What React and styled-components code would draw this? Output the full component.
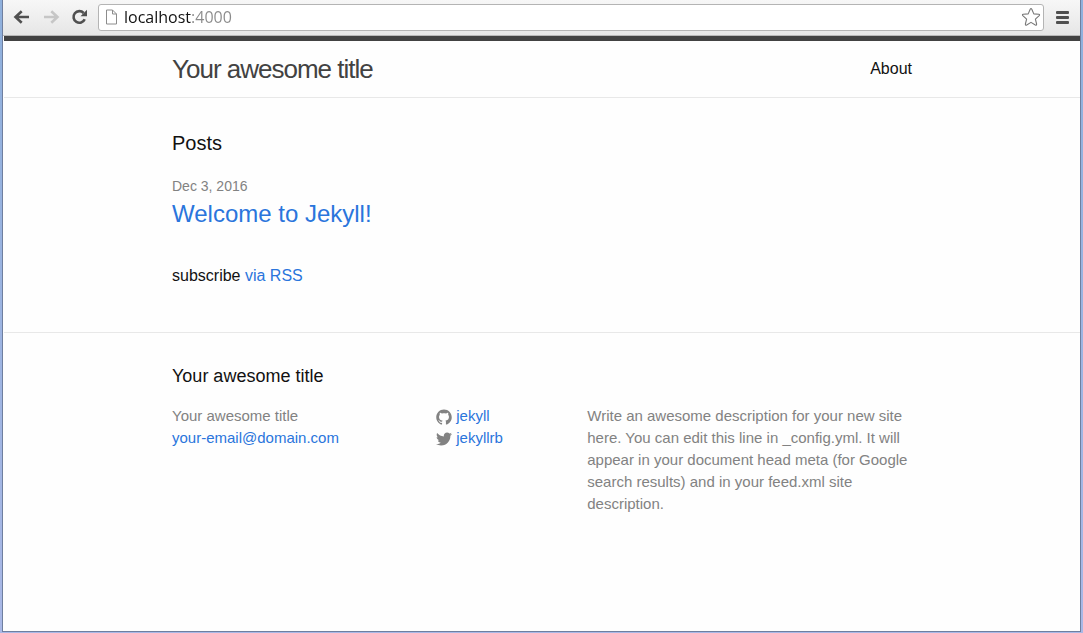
import React from "react";
import styled, { createGlobalStyle } from "styled-components";

const GlobalStyle = createGlobalStyle`
  *, *::before, *::after { box-sizing: border-box; }
  body {
    margin: 0;
    background: #a3bbe2;
    color: #111;
    font: 400 16px/24px "Liberation Sans", Arial, sans-serif;
  }
  h1, h2, h3, p, ul { margin: 0; padding: 0; font-weight: 400; }
  ul { list-style: none; }
`;

const Window = styled.div`
  display: flex;
  flex-direction: column;
  min-height: 100vh;
  padding: 0 2px 1px;
  background: linear-gradient(#8fb0dc, #a9b8e6);
`;

const Frame = styled.div`
  flex: 1;
  display: flex;
  flex-direction: column;
  border: solid #6f7f9f;
  border-width: 0 1px 1px;
  padding-left: 1px;
  background: #fefefe;
`;

const Toolbar = styled.div`
  display: flex;
  align-items: center;
  height: 36px;
  margin-left: -1px;
  padding: 0 9px 1px 8px;
  background: linear-gradient(#f7f7f7, #e6e6e6);
  border-bottom: 1px solid #b8b8b8;
`;

const ToolButton = styled.button`
  display: flex;
  align-items: center;
  justify-content: center;
  width: ${(p) => p.$width || 29}px;
  height: 28px;
  padding: 0;
  border: 0;
  background: none;
  color: ${(p) => (p.disabled ? "#c6c6c6" : "#505050")};
`;

const AddressBar = styled.label`
  flex: 1;
  display: flex;
  align-items: center;
  gap: 6px;
  height: 27px;
  margin: 0 10px 0 8px;
  padding: 0 2px 0 6px;
  border: 1px solid #b4b4b4;
  border-radius: 3px;
  background: #fff;
`;

const AddressInput = styled.input`
  flex: 1;
  min-width: 0;
  height: 24px;
  padding: 0;
  border: 0;
  outline: 0;
  font: 400 16px/24px "Open Sans", "Noto Sans", sans-serif;
  color: #111;
  background: linear-gradient(to right, #111 68px, #8a8a8a 68px);
  background-clip: text;
  -webkit-text-fill-color: transparent;
`;

const Wrapper = styled.div`
  max-width: 800px;
  margin: 0 auto;
  padding: 0 30px;
`;

const Header = styled.header`
  border-top: 5px solid #424242;
  border-bottom: 1px solid #e8e8e8;
`;

const HeaderRow = styled(Wrapper)`
  display: flex;
  justify-content: space-between;
  line-height: 56px;
`;

const SiteTitle = styled.a`
  color: #424242;
  font-size: 26px;
  letter-spacing: -1px;
  text-decoration: none;
`;

const NavLink = styled.a`
  color: #111;
  text-decoration: none;
`;

const Link = styled.a`
  color: #2a75dc;
  text-decoration: none;
`;

const Main = styled.main`
  padding: 30px 0 44px;
`;

const PageHeading = styled.h1`
  margin-bottom: 15px;
  font-size: 20px;
  line-height: 30px;
`;

const PostList = styled.ul`
  margin-bottom: 35px;
`;

const PostDate = styled.time`
  display: block;
  color: #828282;
  font-size: 14px;
  line-height: 26px;
`;

const PostTitle = styled.h2`
  font-size: 24px;
  line-height: 30px;
`;

const Footer = styled.footer`
  padding: 30px 0;
  border-top: 1px solid #e8e8e8;
`;

const FooterHeading = styled.h2`
  margin-bottom: 15px;
  font-size: 18px;
  line-height: 27px;
`;

const FooterColumns = styled.div`
  display: flex;
  margin-left: -15px;
  color: #828282;
  font-size: 15px;
  line-height: 22px;
`;

const FooterColumn = styled.div`
  width: ${(p) => p.$share}%;
  padding-left: 15px;
`;

const SocialLink = styled(Link)`
  display: flex;
  align-items: center;
  gap: 4px;
  svg { fill: #828282; position: relative; top: 1px; }
`;

const GITHUB =
  "M7.999,0.431c-4.285,0-7.76,3.474-7.76,7.761 c0,3.428,2.223,6.337,5.307,7.363c0.388,0.071,0.53-0.168,0.53-0.374c0-0.184-0.007-0.672-0.01-1.32 c-2.159,0.469-2.614-1.04-2.614-1.04c-0.353-0.896-0.862-1.135-0.862-1.135c-0.705-0.481,0.053-0.472,0.053-0.472 c0.779,0.055,1.189,0.8,1.189,0.8c0.692,1.186,1.816,0.843,2.258,0.645c0.071-0.502,0.271-0.843,0.493-1.037 C4.86,11.425,3.049,10.76,3.049,7.786c0-0.847,0.302-1.54,0.799-2.082C3.768,5.507,3.501,4.718,3.924,3.65 c0,0,0.652-0.209,2.134,0.796C6.677,4.273,7.34,4.187,8,4.184c0.659,0.003,1.323,0.089,1.943,0.261 c1.482-1.004,2.132-0.796,2.132-0.796c0.423,1.068,0.157,1.857,0.077,2.054c0.497,0.542,0.798,1.235,0.798,2.082 c0,2.981-1.814,3.637-3.543,3.829c0.279,0.24,0.527,0.713,0.527,1.437c0,1.037-0.01,1.874-0.01,2.129 c0,0.208,0.14,0.449,0.534,0.373c3.081-1.028,5.302-3.935,5.302-7.362C15.76,3.906,12.285,0.431,7.999,0.431z";
const TWITTER =
  "M15.969,3.058c-0.586,0.26-1.217,0.436-1.878,0.515c0.675-0.405,1.194-1.045,1.438-1.809c-0.632,0.375-1.332,0.647-2.076,0.793c-0.596-0.636-1.446-1.033-2.387-1.033c-1.806,0-3.27,1.464-3.27,3.27 c0,0.256,0.029,0.506,0.085,0.745C5.163,5.404,2.753,4.102,1.14,2.124C0.859,2.607,0.698,3.168,0.698,3.767 c0,1.134,0.577,2.135,1.455,2.722C1.616,6.472,1.112,6.325,0.671,6.08c0,0.014,0,0.027,0,0.041c0,1.584,1.127,2.906,2.623,3.206 C3.02,9.402,2.731,9.442,2.433,9.442c-0.211,0-0.416-0.021-0.615-0.059c0.416,1.299,1.624,2.245,3.055,2.271 c-1.119,0.877-2.529,1.4-4.061,1.4c-0.264,0-0.524-0.015-0.78-0.046c1.447,0.928,3.166,1.469,5.013,1.469 c6.015,0,9.304-4.983,9.304-9.304c0-0.142-0.003-0.283-0.009-0.423C14.976,4.29,15.531,3.714,15.969,3.058z";

const SocialIcon = ({ path }) => (
  <svg width="16" height="16" viewBox="0 0 16 16" aria-hidden="true">
    <path d={path} />
  </svg>
);

const ArrowIcon = ({ forward }) => (
  <svg width="18" height="16" viewBox="0 0 18 16" aria-hidden="true">
    <path
      d={forward ? "M2 8H15M9.3 2.2L15.5 8L9.3 13.8" : "M16 8H3M8.7 2.2L2.5 8L8.7 13.8"}
      fill="none"
      stroke="currentColor"
      strokeWidth="2.6"
    />
  </svg>
);

const ReloadIcon = () => (
  <svg width="18" height="16" viewBox="0 0 18 16" aria-hidden="true">
    <path d="M12.6 4A5.8 5.8 0 1 0 13.7 10.2" fill="none" stroke="currentColor" strokeWidth="2.6" />
    <path d="M16 0.8V7.2H9.5Z" fill="currentColor" />
  </svg>
);

const PageIcon = () => (
  <svg width="13" height="16" viewBox="0 0 13 16" aria-hidden="true">
    <path d="M1.5 1H7.5L11.5 5V15H1.5ZM7.5 1V5H11.5" fill="#fff" stroke="#8c8c8c" />
  </svg>
);

const StarIcon = () => (
  <svg width="20" height="20" viewBox="0 0 20 20" aria-hidden="true">
    <path
      d="M9.2 2.2Q10 0.8 10.8 2.2L12.8 6.9L17.8 7.3Q19.1 7.6 18.2 8.6L14.4 12.1L15.6 17Q15.7 18.6 14.3 18L10 15.4L5.7 18Q4.3 18.6 4.4 17L5.6 12.1L1.8 8.6Q0.9 7.6 2.2 7.3L7.2 6.9Z"
      fill="#fff"
      stroke="#777"
      strokeWidth="1.1"
      strokeLinejoin="round"
    />
  </svg>
);

const MenuIcon = () => (
  <svg width="13" height="14" viewBox="0 0 13 14" fill="currentColor" aria-hidden="true">
    <rect y="1" width="13" height="3" rx="1" />
    <rect y="6" width="13" height="3" rx="1" />
    <rect y="11" width="13" height="3" rx="1" />
  </svg>
);

export default function App() {
  return (
    <>
      <GlobalStyle />
      <Window>
        <Frame>
          <Toolbar>
            <ToolButton type="button" aria-label="Back" $width={21}><ArrowIcon /></ToolButton>
            <ToolButton type="button" aria-label="Forward" $width={37} disabled><ArrowIcon forward /></ToolButton>
            <ToolButton type="button" aria-label="Reload" $width={21}><ReloadIcon /></ToolButton>
            <AddressBar>
              <PageIcon />
              <AddressInput type="text" aria-label="Address" defaultValue="localhost:4000" spellCheck={false} />
              <ToolButton type="button" aria-label="Bookmark this page" $width={20}><StarIcon /></ToolButton>
            </AddressBar>
            <ToolButton type="button" aria-label="Menu" $width={17}><MenuIcon /></ToolButton>
          </Toolbar>

          <Header>
            <HeaderRow>
              <SiteTitle href="#home">Your awesome title</SiteTitle>
              <nav><NavLink href="#about">About</NavLink></nav>
            </HeaderRow>
          </Header>

          <Main>
            <Wrapper>
              <PageHeading>Posts</PageHeading>
              <PostList>
                <li>
                  <PostDate dateTime="2016-12-03">Dec 3, 2016</PostDate>
                  <PostTitle><Link href="#welcome">Welcome to Jekyll!</Link></PostTitle>
                </li>
              </PostList>
              <p>subscribe <Link href="#feed">via RSS</Link></p>
            </Wrapper>
          </Main>

          <Footer>
            <Wrapper>
              <FooterHeading>Your awesome title</FooterHeading>
              <FooterColumns>
                <FooterColumn $share={35}>
                  <p>Your awesome title</p>
                  <Link href="mailto:your-email@domain.com">your-email@domain.com</Link>
                </FooterColumn>
                <FooterColumn $share={20}>
                  <SocialLink href="#github"><SocialIcon path={GITHUB} />jekyll</SocialLink>
                  <SocialLink href="#twitter"><SocialIcon path={TWITTER} />jekyllrb</SocialLink>
                </FooterColumn>
                <FooterColumn $share={45}>
                  <p>
                    Write an awesome description for your new site here. You can edit this line in
                    _config.yml. It will appear in your document head meta (for Google search
                    results) and in your feed.xml site description.
                  </p>
                </FooterColumn>
              </FooterColumns>
            </Wrapper>
          </Footer>
        </Frame>
      </Window>
    </>
  );
}
